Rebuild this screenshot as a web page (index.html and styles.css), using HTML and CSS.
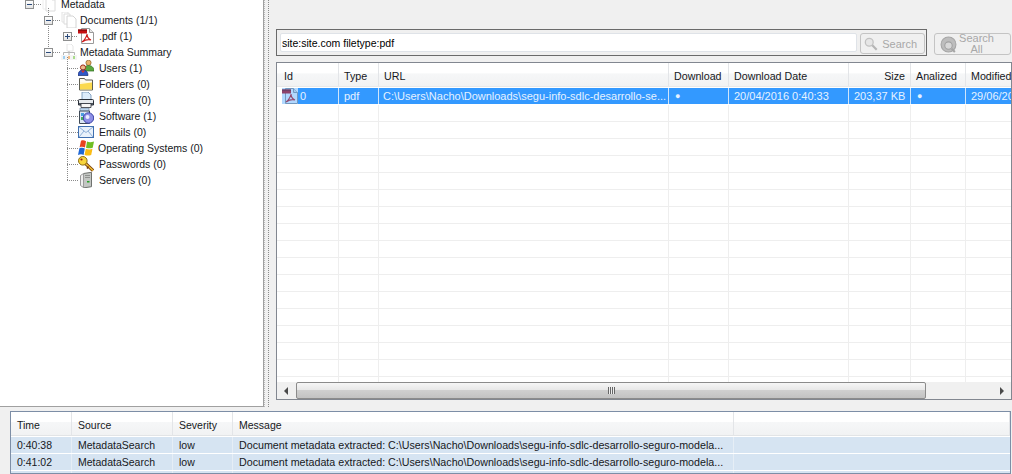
FILE: index.html
```html
<!DOCTYPE html>
<html lang="en">
<head>
<meta charset="utf-8">
<title>Metadata</title>
<link rel="stylesheet" href="styles.css">
</head>
<body>
<svg class="defs" width="0" height="0" aria-hidden="true">
  <symbol id="ghost" viewBox="0 0 16 16"><path d="M1 1h5v12H1z" fill="#fff" stroke="#eeeeee"/><path d="M4 1h6l3 3v11H4z" fill="#fff" stroke="#dcdcdc"/><path d="M10 1v3h3" fill="#f2f2f2" stroke="#dcdcdc"/></symbol>
  <symbol id="ghosts" viewBox="0 0 16 16"><path d="M1 0h6v10H1z" fill="#fff" stroke="#e2e2e2"/><path d="M3 2h6v10H3z" fill="#fff" stroke="#dcdcdc"/><path d="M6 4h6l3 3v9H6z" fill="#fff" stroke="#d4d4d4"/></symbol>
  <symbol id="summary" viewBox="0 0 16 16"><path d="M6 0h4l2 2v5H6z" fill="#fff" stroke="#e6e6e6"/><path d="M2.500 11V8.500h11V11M8 7v4" fill="none" stroke="#b5b5b5"/><rect x="0" y="11" width="16" height="5" fill="#f4f4f4"/><rect x="2" y="12" width="2" height="3" fill="#9fd0f2"/><rect x="7" y="12" width="2" height="3" fill="#f5bd85"/><rect x="12" y="12" width="2" height="3" fill="#a9dc8c"/></symbol>
  <symbol id="pdf" viewBox="0 0 16 16"><path d="M3.500.5h8l4 4v11h-12z" fill="#fff" stroke="#9a9a9a"/><path d="M11.500.5v4h4" fill="#e8e8e8" stroke="#9a9a9a"/><path d="M0 1.500h9v4H0z" fill="#c40f12"/><path d="M0 1.500h9v1.200H0z" fill="#7e0a0c"/><path d="M9 6c-.5 3.500-2.500 6-5 8 3-2 6-3 9-2-2.500-1-4-3.500-4-6z" fill="none" stroke="#cc1a1a" stroke-width="1.200"/></symbol>
  <symbol id="users" viewBox="0 0 16 16"><circle cx="10.500" cy="2.800" r="2.600" fill="#e9b26a" stroke="#8a5a1f" stroke-width=".7"/><path d="M6 11c0-4 2-5.500 4.500-5.500S16 7 16 11z" fill="#5aa83e" stroke="#2e6a20" stroke-width=".7"/><circle cx="5" cy="7.500" r="2.600" fill="#ecb98a" stroke="#a02a18" stroke-width="1"/><path d="M0 15.500c0-3.500 2-5.500 5-5.500s5 2 5 5.500z" fill="#2f58c8" stroke="#1a2f70" stroke-width=".7"/><path d="M3 10.500l2 2.500 2-2.500z" fill="#d8362a"/></symbol>
  <symbol id="folder" viewBox="0 0 16 16"><path d="M1.500 2.500h5l1 1.500h7v10h-13z" fill="#fdfaf0" stroke="#5f5f52"/><path d="M2 6h12v1H2z" fill="#fff8d8"/><path d="M2 8l12-1.500V13.500H2z" fill="#fbd94e"/></symbol>
  <symbol id="printer" viewBox="0 0 16 16"><path d="M4 0h6l3 3v6H4z" fill="#dcecfb" stroke="#6d8fb4" stroke-width=".8"/><path d="M1.500 7.500h13a1 1 0 0 1 1 1v4.500H.5V8.500a1 1 0 0 1 1-1z" fill="#e6eaee" stroke="#2a2f38"/><path d="M1 11h14v2H1z" fill="#4c545e"/><path d="M3 11.500h10v4H3z" fill="#f6f6f6" stroke="#2a2f38" stroke-width=".8"/></symbol>
  <symbol id="software" viewBox="0 0 16 16"><path d="M2 0h9v5H2z" fill="#bcd6ef" stroke="#7d95ae" stroke-width=".8"/><path d="M1.500 3h10v12.500h-10z" fill="#d9e6f3" stroke="#3f4a56"/><rect x="3" y="5" width="3" height="3" fill="#4a9ee0"/><rect x="3" y="9" width="3" height="3" fill="#49b15a"/><circle cx="10.500" cy="10" r="5.200" fill="#8d8fe6" stroke="#3e47a8"/><circle cx="9.500" cy="9" r="2" fill="#eeeeff"/></symbol>
  <symbol id="email" viewBox="0 0 16 16"><rect x=".5" y="2.500" width="15" height="11" fill="#e8f1fb" stroke="#3f6fb0"/><path d="M1 3l7 5.500L15 3M1 13l5-6M15 13l-5-6" fill="none" stroke="#8fb0d8"/></symbol>
  <symbol id="windows" viewBox="0 0 16 16"><path d="M3 .8c2-.8 3.300-.4 5 .4L7 7.500C5.200 6.700 3.800 6.400 1.600 7.200z" fill="#e8431f"/><path d="M9 1.500c2.200.9 4 .9 7 0L14.700 7.800c-2.700.8-4.200.6-6.700-.1z" fill="#6fbe24"/><path d="M1.400 8.200C3.800 7.400 5.200 7.600 6.800 8.500L5.600 15C4 14.100 2.300 14 0 15z" fill="#1f66d4"/><path d="M7.800 8.800c2.500.8 4.300.9 6.700 0L13.200 15c-2.700.9-4.600.7-6.700 0z" fill="#fbbc14"/></symbol>
  <symbol id="key" viewBox="0 0 16 16"><path d="M7 7l8 7.500" stroke="#7c3f0c" stroke-width="3.200"/><path d="M7 7l8 7.500" stroke="#f0c030" stroke-width="1.600"/><path d="M10.500 10.500l-1.500 2" stroke="#7c3f0c" stroke-width="1.500"/><circle cx="4.800" cy="4.800" r="4.300" fill="#f8d53c" stroke="#8a6a10"/><circle cx="3.500" cy="3.500" r="1.100" fill="#9a1c10"/></symbol>
  <symbol id="server" viewBox="0 0 16 16"><path d="M5.500 1.500l8-1.200v14.400l-8 1.200z" fill="#c3c6c3" stroke="#6f726f"/><path d="M2.500 3.500l3-2v14l-3-2z" fill="#eeeeee" stroke="#9a9a9a"/><rect x="9" y="9" width="2.500" height="1.500" fill="#2aa02a"/><path d="M7 3.500h5M7 5.500h5" stroke="#8f918f"/></symbol>
</svg>

<div class="top">
  <nav class="tree">
    <ul class="tree-root">
      <li class="node lvl0"><span class="exp minus"></span><span class="conn"></span><svg class="ico"><use href="#ghost"/></svg><span class="label">Metadata</span></li>
      <li>
        <ul class="tree-branch">
          <li class="node lvl1"><span class="exp minus"></span><span class="conn"></span><svg class="ico"><use href="#ghosts"/></svg><span class="label">Documents (1/1)</span></li>
          <li class="node lvl2"><span class="exp plus"></span><span class="conn short"></span><svg class="ico"><use href="#pdf"/></svg><span class="label">.pdf (1)</span></li>
          <li class="node lvl1"><span class="exp minus"></span><span class="conn"></span><svg class="ico"><use href="#summary"/></svg><span class="label">Metadata Summary</span></li>
        </ul>
      </li>
      <li>
        <ul class="tree-leaves">
          <li class="node leaf"><span class="conn long"></span><svg class="ico"><use href="#users"/></svg><span class="label">Users (1)</span></li>
          <li class="node leaf"><span class="conn long"></span><svg class="ico"><use href="#folder"/></svg><span class="label">Folders (0)</span></li>
          <li class="node leaf"><span class="conn long"></span><svg class="ico"><use href="#printer"/></svg><span class="label">Printers (0)</span></li>
          <li class="node leaf"><span class="conn long"></span><svg class="ico"><use href="#software"/></svg><span class="label">Software (1)</span></li>
          <li class="node leaf"><span class="conn long"></span><svg class="ico"><use href="#email"/></svg><span class="label">Emails (0)</span></li>
          <li class="node leaf"><span class="conn long"></span><svg class="ico"><use href="#windows"/></svg><span class="label os">Operating Systems (0)</span></li>
          <li class="node leaf"><span class="conn long"></span><svg class="ico"><use href="#key"/></svg><span class="label">Passwords (0)</span></li>
          <li class="node leaf"><span class="conn long"></span><svg class="ico"><use href="#server"/></svg><span class="label">Servers (0)</span></li>
        </ul>
      </li>
    </ul>
  </nav>
  <div class="splitter"></div>
  <main class="main">
    <div class="search-row">
      <div class="searchbox">
        <div class="input">site:site.com filetype:pdf</div>
        <div class="btn btn-search">
          <svg class="btn-ico" viewBox="0 0 16 16"><circle cx="6" cy="6" r="4.500" fill="#e6e6e6" stroke="#c2c2c2" stroke-width="1.500"/><path d="M9.500 9.500l5 5" stroke="#b5b5b5" stroke-width="2.500"/></svg>
          <span>Search</span>
        </div>
      </div>
      <div class="btn btn-all">
        <svg class="btn-ico large" viewBox="0 0 16 16"><circle cx="8" cy="8" r="7" fill="#bdbdbd" stroke="#a5a5a5"/><circle cx="8" cy="9" r="3.500" fill="#d8d8d8" stroke="#a0a0a0"/><path d="M11 12l3 3" stroke="#a5a5a5" stroke-width="2"/></svg>
        <span class="two-line">Search<br>All</span>
      </div>
    </div>
    <section class="grid">
      <div class="grid-clip">
        <div class="cols head">
          <div class="hd">Id</div><div class="hd">Type</div><div class="hd">URL</div><div class="hd">Download</div><div class="hd">Download Date</div><div class="hd right">Size</div><div class="hd">Analized</div><div class="hd">Modified</div>
        </div>
        <div class="cols selected">
          <div class="cell idcell"><svg class="row-ico"><use href="#pdf"/></svg><span>0</span></div><div class="cell">pdf</div><div class="cell url">C:\Users\Nacho\Downloads\segu-info-sdlc-desarrollo-se...</div><div class="cell dot">●</div><div class="cell">20/04/2016 0:40:33</div><div class="cell right">203,37 KB</div><div class="cell dot">●</div><div class="cell">29/06/2015</div>
        </div>
        <div class="cols filler">
          <div></div><div></div><div></div><div></div><div></div><div></div><div></div><div></div>
        </div>
      </div>
      <div class="hscroll">
        <span class="arrow arrow-left"></span>
        <span class="thumb"><span class="grip"></span></span>
        <span class="arrow arrow-right"></span>
      </div>
    </section>
  </main>
</div>

<section class="log">
  <div class="log-cols log-head">
    <div>Time</div><div>Source</div><div>Severity</div><div>Message</div><div></div>
  </div>
  <div class="log-cols log-row">
    <div>0:40:38</div><div>MetadataSearch</div><div>low</div><div class="msg">Document metadata extracted: C:\Users\Nacho\Downloads\segu-info-sdlc-desarrollo-seguro-modela...</div><div></div>
  </div>
  <div class="log-cols log-row">
    <div>0:41:02</div><div>MetadataSearch</div><div>low</div><div class="msg">Document metadata extracted: C:\Users\Nacho\Downloads\segu-info-sdlc-desarrollo-seguro-modela...</div><div></div>
  </div>
  <div class="log-cols log-row">
    <div></div><div></div><div></div><div></div><div></div>
  </div>
</section>
</body>
</html>
```
FILE: styles.css
```css
* { box-sizing: border-box; }
html, body { margin: 0; padding: 0; }
body {
  width: 1012px;
  height: 474px;
  overflow: hidden;
  background: #f0f0f0;
  color: #16181c;
  font: 10.5px/16px "Liberation Sans", Arial, sans-serif;
}
.defs { position: absolute; }
ul { list-style: none; margin: 0; padding: 0; }

.top { display: flex; height: 407px; }

/* Tree */
.tree {
  width: 264px;
  background: #fff;
  border-right: 1px solid #a0a0a0;
  border-bottom: 1px solid #a0a0a0;
  overflow: hidden;
}
.tree-root { margin-top: -4px; }
.node { display: flex; align-items: center; height: 16px; white-space: nowrap; }
.lvl0 { padding-left: 25px; }
.lvl1 { padding-left: 44px; }
.lvl2 { padding-left: 63px; }
.leaf { padding-left: 67px; }
.exp {
  position: relative;
  flex: none;
  width: 9px;
  height: 9px;
  border: 1px solid #8e8f8f;
  background: linear-gradient(#fff, #e4e4e4);
}
.exp::before {
  content: "";
  position: absolute;
  left: 1px;
  top: 3px;
  width: 5px;
  height: 1px;
  background: #2a4a7a;
}
.plus::after {
  content: "";
  position: absolute;
  left: 3px;
  top: 1px;
  width: 1px;
  height: 5px;
  background: #2a4a7a;
}
.conn {
  flex: none;
  width: 8px;
  height: 1px;
  background: repeating-linear-gradient(90deg, #8a8a8a 0 1px, transparent 1px 2px);
}
.conn.short { width: 6px; margin-right: 2px; }
.conn.long { width: 11px; }
.ico { flex: none; width: 16px; height: 16px; }
.label { margin-left: 3px; }
.lvl2 .ico { margin-left: -2px; margin-right: 2px; }
.leaf .label { margin-left: 5px; }
.leaf .label.os { margin-left: 4px; }

.tree-branch, .tree-leaves { position: relative; }
.tree-branch::before {
  content: "";
  position: absolute;
  left: 48px;
  top: -4px;
  height: 40px;
  width: 1px;
  background: repeating-linear-gradient(#8a8a8a 0 1px, transparent 1px 2px);
}
.tree-leaves::before {
  content: "";
  position: absolute;
  left: 67px;
  top: -3px;
  bottom: 8px;
  width: 1px;
  background: repeating-linear-gradient(#8a8a8a 0 1px, transparent 1px 2px);
}

/* Splitter */
.splitter {
  flex: none;
  width: 5px;
  height: 407px;
  border-right: 1px dotted #8a8a8a;
  border-left: 1px dotted #b8b8b8;
  margin-right: 7px;
}

/* Right side */
.main { flex: 1; min-width: 0; padding-top: 29px; display: flex; flex-direction: column; }
.search-row { display: flex; align-items: flex-start; }
.searchbox {
  display: flex;
  width: 651px;
  height: 27px;
  padding: 3px 1px 3px 3px;
  border: 1px solid #6a6a6a;
}
.input {
  width: 579px;
  height: 19px;
  padding-left: 1px;
  background: #fff;
  border: 1px solid #dfe3e8;
  border-radius: 2px;
  line-height: 18px;
  color: #000;
}
.btn {
  display: flex;
  align-items: center;
  color: #a8a8a8;
  background: #f0f0f0;
  border: 1px solid #c4c4c4;
  border-radius: 3px;
}
.btn-search {
  width: 65px;
  height: 21px;
  margin-left: 3px;
  padding-left: 3px;
  gap: 4px;
  font-size: 11px;
}
.btn-all {
  width: 77px;
  height: 22px;
  margin: 4px 0 0 7px;
  padding-left: 5px;
  overflow: hidden;
  font-size: 11px;
}
.btn-ico { flex: none; width: 14px; height: 14px; }
.btn-ico.large { width: 17px; height: 17px; }
.two-line { flex: 1; margin-left: 2px; text-align: center; line-height: 11px; padding-right: 16px; }

/* Grid */
.grid {
  display: flex;
  flex-direction: column;
  width: 736px;
  height: 338px;
  margin-top: 6px;
  border: 1px solid #828790;
  background: #fff;
}
.grid-clip { flex: 1; min-height: 0; overflow: hidden; }
.cols {
  display: grid;
  grid-template-columns: 62px 40px 290px 60px 120px 62px 55px 100px;
  width: 789px;
}
.head { height: 25px; font-size: 10.7px; }
.hd {
  height: 24px;
  padding: 5px 5px 0;
  line-height: 16px;
  border-right: 1px solid #e3e5e8;
  border-bottom: 1px solid #e8e8e8;
  background: linear-gradient(#fff 0 45%, #f6f7f8 46%, #f1f2f3 100%);
}
.hd:first-child { padding-left: 7px; }
.right { text-align: right; }
.selected {
  height: 17px;
  color: #e6f2ff;
  font-size: 11px;
}
.cell {
  height: 16px;
  padding: 0 5px;
  line-height: 16px;
  white-space: nowrap;
  overflow: hidden;
  background: #3399ff;
  border-right: 1px solid #cfe5fb;
}
.idcell {
  display: flex;
  align-items: center;
  padding-left: 0;
  background: linear-gradient(90deg, #fff 0 5px, #3399ff 5px);
}
.row-ico { flex: none; width: 16px; height: 16px; margin-left: 5px; margin-right: 2px; opacity: .62; background: #fff; }
.url { padding-left: 4px; }
.dot { font-size: 9px; padding-left: 6px; }
.filler {
  height: 278px;
  background: repeating-linear-gradient(#fff 0 16px, #eeeeee 16px 17px);
}
.filler div { border-right: 1px solid #eeeeee; }

/* Horizontal scrollbar */
.hscroll {
  flex: none;
  display: flex;
  align-items: center;
  height: 17px;
  background: #f0f0f0;
}
.arrow { flex: none; width: 0; height: 0; border-style: solid; border-color: transparent; }
.arrow-left { border-width: 4px 4px 4px 0; border-right-color: #4a4a4a; margin: 0 8px 0 7px; }
.arrow-right { border-width: 4px 0 4px 4px; border-left-color: #4a4a4a; margin-left: 74px; }
.thumb {
  display: flex;
  align-items: center;
  justify-content: center;
  width: 630px;
  height: 17px;
  border: 1px solid #8b8b8b;
  border-radius: 2px;
  background: linear-gradient(#f6f6f6, #e8e8e8 45%, #cfcfcf 50%, #c2c2c2);
}
.grip { width: 7px; height: 7px; background: repeating-linear-gradient(90deg, #666 0 1px, #eee 1px 2px); }

/* Log */
.log {
  height: 63px;
  margin: 4px 1px 0 10px;
  overflow: hidden;
  border: 1px solid #7d8ea6;
  background: #fff;
}
.log-cols { display: grid; grid-template-columns: 61px 101px 60px 501px 1fr; }
.log-cols > div { padding-left: 6px; white-space: nowrap; overflow: hidden; }
.log-head { height: 25px; }
.log-head > div {
  height: 24px;
  padding-top: 5px;
  border-right: 1px solid #e3e5e8;
  border-bottom: 1px solid #e2e4e6;
  background: linear-gradient(#fff 0 42%, #f6f7f8 43%, #f1f2f3 100%);
}
.log-row { height: 17px; background: #fff; }
.log-row > div {
  height: 16px;
  background: #d6e4f2;
  border-right: 1px solid #e6eef6;
}
.log-row > div:nth-child(5) { border-right: 0; }
.log-row > .msg { font-size: 10.7px; }
```
